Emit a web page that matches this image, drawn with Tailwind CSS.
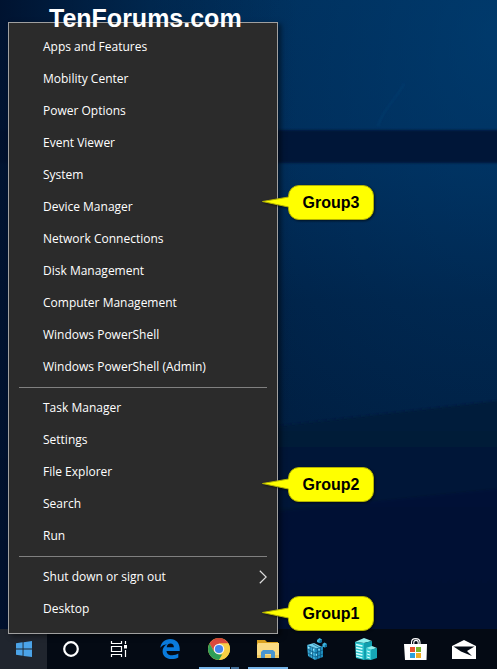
<!DOCTYPE html>
<html lang="en">
<head>
<meta charset="utf-8">
<meta name="viewport" content="width=device-width, initial-scale=1">
<title>Quick Link menu</title>
<script src="https://cdn.jsdelivr.net/npm/@tailwindcss/browser@4"></script>
</head>
<body class="relative flex min-h-screen flex-col overflow-hidden bg-[#001836] font-['Open_Sans','Noto_Sans',sans-serif]">

<!-- Wallpaper -->
<svg class="absolute inset-0 h-full w-full" viewBox="0 0 497 669" preserveAspectRatio="none" aria-hidden="true">
  <defs>
    <linearGradient id="base" x1="0" y1="0" x2="0" y2="1">
      <stop offset="0" stop-color="#002f5b"/><stop offset=".25" stop-color="#002b56"/><stop offset=".45" stop-color="#002247"/><stop offset=".7" stop-color="#001f42"/><stop offset="1" stop-color="#00142f"/>
    </linearGradient>
    <linearGradient id="left" x1="0" y1="0" x2="1" y2="0">
      <stop offset="0" stop-color="#00102c" stop-opacity=".9"/><stop offset=".3" stop-color="#00142f" stop-opacity=".3"/><stop offset=".6" stop-color="#00142f" stop-opacity="0"/>
    </linearGradient>
    <radialGradient id="glow" cx="1" cy=".05" r=".7">
      <stop offset="0" stop-color="#00457d" stop-opacity=".5"/><stop offset="1" stop-color="#003a70" stop-opacity="0"/>
    </radialGradient>
    <linearGradient id="low" x1="0" y1="0" x2="0" y2="1">
      <stop offset="0" stop-color="#001b3b"/><stop offset="1" stop-color="#001430"/>
    </linearGradient>
    <filter id="soft"><feGaussianBlur stdDeviation="1"/></filter>
  </defs>
  <rect width="497" height="669" fill="url(#base)"/>
  <rect width="497" height="669" fill="url(#glow)"/>
  <path d="M-5 130H505V163H-5Z" fill="#001939" filter="url(#soft)"/>
  <path d="M378 126C383 110 395 100 404 84" stroke="#0a4a80" stroke-opacity=".6" fill="none" filter="url(#soft)"/>
  <path d="M-5 459L270 427L505 400V675H-5Z" fill="url(#low)" filter="url(#soft)"/>
  <path d="M-5 540L505 488V675H-5Z" fill="#00102c" fill-opacity=".25" filter="url(#soft)"/>
  <rect width="497" height="669" fill="url(#left)"/>
</svg>

<!-- Taskbar -->
<nav aria-label="Taskbar" class="relative mt-auto flex h-10 items-stretch bg-[#040a14]">
  <button aria-label="Start" class="flex w-[47px] items-center justify-center bg-[#20252e]">
    <svg class="h-4 w-4" viewBox="0 0 16 16" fill="#4ba3e8"><path d="M0 2.3L6.6 1.3V7.6H0ZM7.5 1.2L16 0V7.6H7.5ZM0 8.4H6.6V14.8L0 13.8ZM7.5 8.4H16V16L7.5 14.9Z"/></svg>
  </button>
  <button aria-label="Cortana" class="flex w-12 items-center justify-center">
    <svg class="h-4 w-4" viewBox="0 0 16 16"><circle cx="8" cy="8" r="6.800" fill="none" stroke="#fff" stroke-width="2.200"/></svg>
  </button>
  <button aria-label="Task View" class="flex w-12 items-center justify-center">
    <svg class="h-4 w-[18px]" viewBox="0 0 18 16" fill="none" stroke="#fff" stroke-width="1.200"><path d="M1.500 0V2.500H11.500V0M1.500 16V13.500H11.500V16M1.500 5.500H11.500V10.500H1.500ZM15.500 0V3M15.500 9V16"/><path d="M14 4H17V7.500H14Z" fill="#fff" stroke="none"/></svg>
  </button>
  <div class="ml-[3px] flex gap-px">
    <button aria-label="Microsoft Edge" class="flex w-12 items-center justify-center">
      <svg class="h-5 w-5" viewBox="0 0 20 20"><path fill="#0a7bdc" d="M.3 8.8C1 3.6 4.700 0 10.200 0C16.200 0 19.700 4.400 19.700 9.600V11.900H6.500C6.700 15.100 9.400 16.300 12.300 16.300C14.600 16.300 16.700 15.600 18.300 14.600V18.500C16.500 19.500 14.100 20 11.600 20C6.200 20 2.600 16.900 2.600 12.200C2.600 9.300 4.200 6.700 7 5.300C4 5.600 1.800 6.800.3 8.800ZM6.700 8.300H13.900C13.900 5.900 12.700 4.500 10.500 4.500C8.300 4.500 6.900 6.200 6.700 8.300Z"/></svg>
    </button>
    <button aria-label="Google Chrome" class="relative flex w-12 items-center justify-center">
      <svg class="h-[22px] w-[22px]" viewBox="0 0 22 22"><circle cx="11" cy="11" r="11" fill="#f7cf45"/><path fill="#dc4a3d" d="M1.500 5.500A11 11 0 0 1 20.500 5.500H11L6.200 13.700Z"/><path fill="#2f9e58" d="M1.500 5.500L6.200 13.700L11 16.500H15.700L11 22A11 11 0 0 1 1.500 5.500Z"/><path fill="#f7cf45" d="M11 5.500H20.500A11 11 0 0 1 11 22L15.800 13.700Z"/><circle cx="11" cy="11" r="5.300" fill="#f4f4f4"/><circle cx="11" cy="11" r="4.100" fill="#4384ed"/></svg>
      <span class="absolute inset-x-1 bottom-0 flex h-0.5 gap-px"><span class="flex-1 bg-[#76b4e8]"></span><span class="w-2 bg-[#45709a]"></span></span>
    </button>
    <button aria-label="File Explorer" class="relative flex w-12 items-center justify-center">
      <svg class="h-[18px] w-[22px]" viewBox="0 0 22 18"><path fill="#dba321" d="M0 0H8L10 2H21V6H0Z"/><path fill="#fadb83" d="M1 3H22V18H0V5Z"/><path fill="#f0c75f" d="M0 15H22V18H0Z"/><path fill="#4a96cf" d="M4 18V12L6 10H16L18 12V18H14V14H8V18Z"/></svg>
      <span class="absolute inset-x-1 bottom-0 h-0.5 bg-[#76b4e8]"></span>
    </button>
    <button aria-label="Registry Editor" class="flex w-12 items-center justify-center">
      <svg class="h-[22px] w-5" viewBox="0 0 20 22"><path fill="#6fd0ef" d="M0 7L7 5L15 9L8 12Z"/><path fill="#37a9d6" d="M0 7L8 11V22L1 18Z"/><path fill="#1d8cbc" d="M8 11L16 8V19L8 22Z"/><path d="M0 11L8 15L16 12M1 15L8 19L16 16M3 8V20M5.500 9.500V21M10.500 10V21M13.500 9V20M2 8L10 11M6 6L13 10" stroke="#0a4a70" stroke-width=".6" fill="none"/><path d="M1 9.500L2.500 10M4 15L5 15.500M6 11.500L7 12M9 17L10 16.700M11.500 12L12.700 11.500" stroke="#a5edff" stroke-width="1.400"/><path fill="#3fb4df" d="M10 2L12.500 0L15 1.500V4L12.500 5L10 4ZM15.500 6L17.500 4.500L20 6V8.500L17.700 9.500L15.500 8.500Z"/><path fill="#0e6c9b" d="M12.500 2.500L15 1.500V4L12.500 5ZM17.700 7L20 6V8.500L17.700 9.500Z"/></svg>
    </button>
    <button aria-label="Server Manager" class="flex w-12 items-center justify-center">
      <svg class="h-[22px] w-[22px]" viewBox="0 0 22 22"><path fill="#91f0ee" d="M0 4L9 0L17 3L9 5Z"/><path fill="#25bfc9" d="M0 4L9 5V22L1 20Z"/><path fill="#109eae" d="M9 5L17 3V21L9 22Z"/><path d="M1 6.500L7.500 8M1 9.500L7.500 11M1 12.500L7.500 14M1 15.500L7.500 17M1 18L7.500 20" stroke="#d1ffff" stroke-width="1.300"/><path fill="#91f0ee" d="M11 10L17 8L22 10L16 12Z"/><path fill="#3acdd4" d="M11 10L16 11.500V22L11 21Z"/><path fill="#16a6b5" d="M16 11.500L22 10V20L16 22Z"/><path d="M12 13L15 14M12 16L15 17M12 19L15 20" stroke="#d1ffff"/></svg>
    </button>
    <button aria-label="Microsoft Store" class="flex w-12 items-center justify-center">
      <svg class="h-[22px] w-[23px]" viewBox="0 0 23 22"><path d="M7.500 7V4.500C7.500 2 9 .6 11.500 .6S16 2 16 4.500V7M9.800 7V4.500C9.800 3.200 10.500 2.400 12 2.400S14.200 3.200 14.200 4.500V7" stroke="#fff" stroke-width="1.100" fill="none"/><path fill="#fff" d="M0 6H23L22.500 22H1Z"/><path fill="#e8512b" d="M6 9H11V14H6Z"/><path fill="#7ab52a" d="M12 9H17V14H12Z"/><path fill="#2ba0dd" d="M6 15H11V20H6Z"/><path fill="#f2ad22" d="M12 15H17V20H12Z"/></svg>
    </button>
    <button aria-label="Mail" class="flex w-12 items-center justify-center">
      <svg class="h-[19px] w-6" viewBox="0 0 24 19"><path fill="#fff" d="M0 6L12 0L24 6V19H0Z"/><path fill="#040a14" d="M1.500 6.500H22.500L15 11L20 16L9 11.500Z"/></svg>
    </button>
  </div>
</nav>

<!-- Quick Link menu, anchored above the Start button -->
<div role="menu" aria-label="Quick Link menu" class="absolute bottom-[35px] left-2 w-[270px] border border-[#a0a0a0] bg-[#2b2b2b] py-2 text-xs text-white shadow-[3px_2px_5px_rgba(0,0,0,0.5)]">
  <div role="group" aria-label="Group3" class="relative flex flex-col">
    <button role="menuitem" class="h-8 px-[34px] text-left">Apps and Features</button>
    <button role="menuitem" class="h-8 px-[34px] text-left">Mobility Center</button>
    <button role="menuitem" class="h-8 px-[34px] text-left">Power Options</button>
    <button role="menuitem" class="h-8 px-[34px] text-left">Event Viewer</button>
    <button role="menuitem" class="h-8 px-[34px] text-left">System</button>
    <button role="menuitem" class="h-8 px-[34px] text-left">Device Manager</button>
    <button role="menuitem" class="h-8 px-[34px] text-left">Network Connections</button>
    <button role="menuitem" class="h-8 px-[34px] text-left">Disk Management</button>
    <button role="menuitem" class="h-8 px-[34px] text-left">Computer Management</button>
    <button role="menuitem" class="h-8 px-[34px] text-left">Windows PowerShell</button>
    <button role="menuitem" class="h-8 px-[34px] text-left">Windows PowerShell (Admin)</button>
    <div class="absolute top-[154px] left-full -ml-[15px] flex h-[35px] w-[112px] items-center justify-center pl-[26px] font-['Liberation_Sans',Arial,sans-serif] text-base font-bold text-black">
      <svg class="absolute inset-0 h-full w-full drop-shadow-[1px_1px_1px_rgba(0,0,0,0.6)]" viewBox="0 0 112 35" aria-hidden="true"><path d="M.5 16.500L26.500 12V11A10.500 10.500 0 0 1 37 .5H101A10.500 10.500 0 0 1 111.500 11V24A10.500 10.500 0 0 1 101 34.500H37A10.500 10.500 0 0 1 26.500 24V22Z" fill="#ff0" stroke="#b3b300"/></svg>
      <span class="relative">Group3</span>
    </div>
  </div>
  <hr class="mx-2.5 my-1 border-[#808080]">
  <div role="group" aria-label="Group2" class="relative flex flex-col">
    <button role="menuitem" class="h-8 px-[34px] text-left">Task Manager</button>
    <button role="menuitem" class="h-8 px-[34px] text-left">Settings</button>
    <button role="menuitem" class="h-8 px-[34px] text-left">File Explorer</button>
    <button role="menuitem" class="h-8 px-[34px] text-left">Search</button>
    <button role="menuitem" class="h-8 px-[34px] text-left">Run</button>
    <div class="absolute top-[75px] left-full -ml-[15px] flex h-[35px] w-[112px] items-center justify-center pl-[26px] font-['Liberation_Sans',Arial,sans-serif] text-base font-bold text-black">
      <svg class="absolute inset-0 h-full w-full drop-shadow-[1px_1px_1px_rgba(0,0,0,0.6)]" viewBox="0 0 112 35" aria-hidden="true"><path d="M.5 16.500L26.500 12V11A10.500 10.500 0 0 1 37 .5H101A10.500 10.500 0 0 1 111.500 11V24A10.500 10.500 0 0 1 101 34.500H37A10.500 10.500 0 0 1 26.500 24V22Z" fill="#ff0" stroke="#b3b300"/></svg>
      <span class="relative">Group2</span>
    </div>
  </div>
  <hr class="mx-2.5 my-1 border-[#808080]">
  <div role="group" aria-label="Group1" class="relative flex flex-col">
    <button role="menuitem" aria-haspopup="menu" class="flex h-8 items-center justify-between pr-2.5 pl-[34px] text-left">Shut down or sign out
      <svg class="h-[14px] w-2" viewBox="0 0 8 14" fill="none" stroke="#dedede" stroke-width="1.200" aria-hidden="true"><path d="M.8 .8L7.200 7L.8 13.200"/></svg>
    </button>
    <button role="menuitem" class="h-8 px-[34px] text-left">Desktop</button>
    <div class="absolute top-[35px] left-full -ml-[15px] flex h-[35px] w-[112px] items-center justify-center pl-[26px] font-['Liberation_Sans',Arial,sans-serif] text-base font-bold text-black">
      <svg class="absolute inset-0 h-full w-full drop-shadow-[1px_1px_1px_rgba(0,0,0,0.6)]" viewBox="0 0 112 35" aria-hidden="true"><path d="M.5 16.500L26.500 12V11A10.500 10.500 0 0 1 37 .5H101A10.500 10.500 0 0 1 111.500 11V24A10.500 10.500 0 0 1 101 34.500H37A10.500 10.500 0 0 1 26.500 24V22Z" fill="#ff0" stroke="#b3b300"/></svg>
      <span class="relative">Group1</span>
    </div>
  </div>
</div>

<!-- Site watermark over the menu's top edge -->
<p class="absolute top-1 left-[49px] font-['Liberation_Sans',Arial,sans-serif] text-[25px] leading-7 font-bold text-white">TenForums.com</p>
</body>
</html>
